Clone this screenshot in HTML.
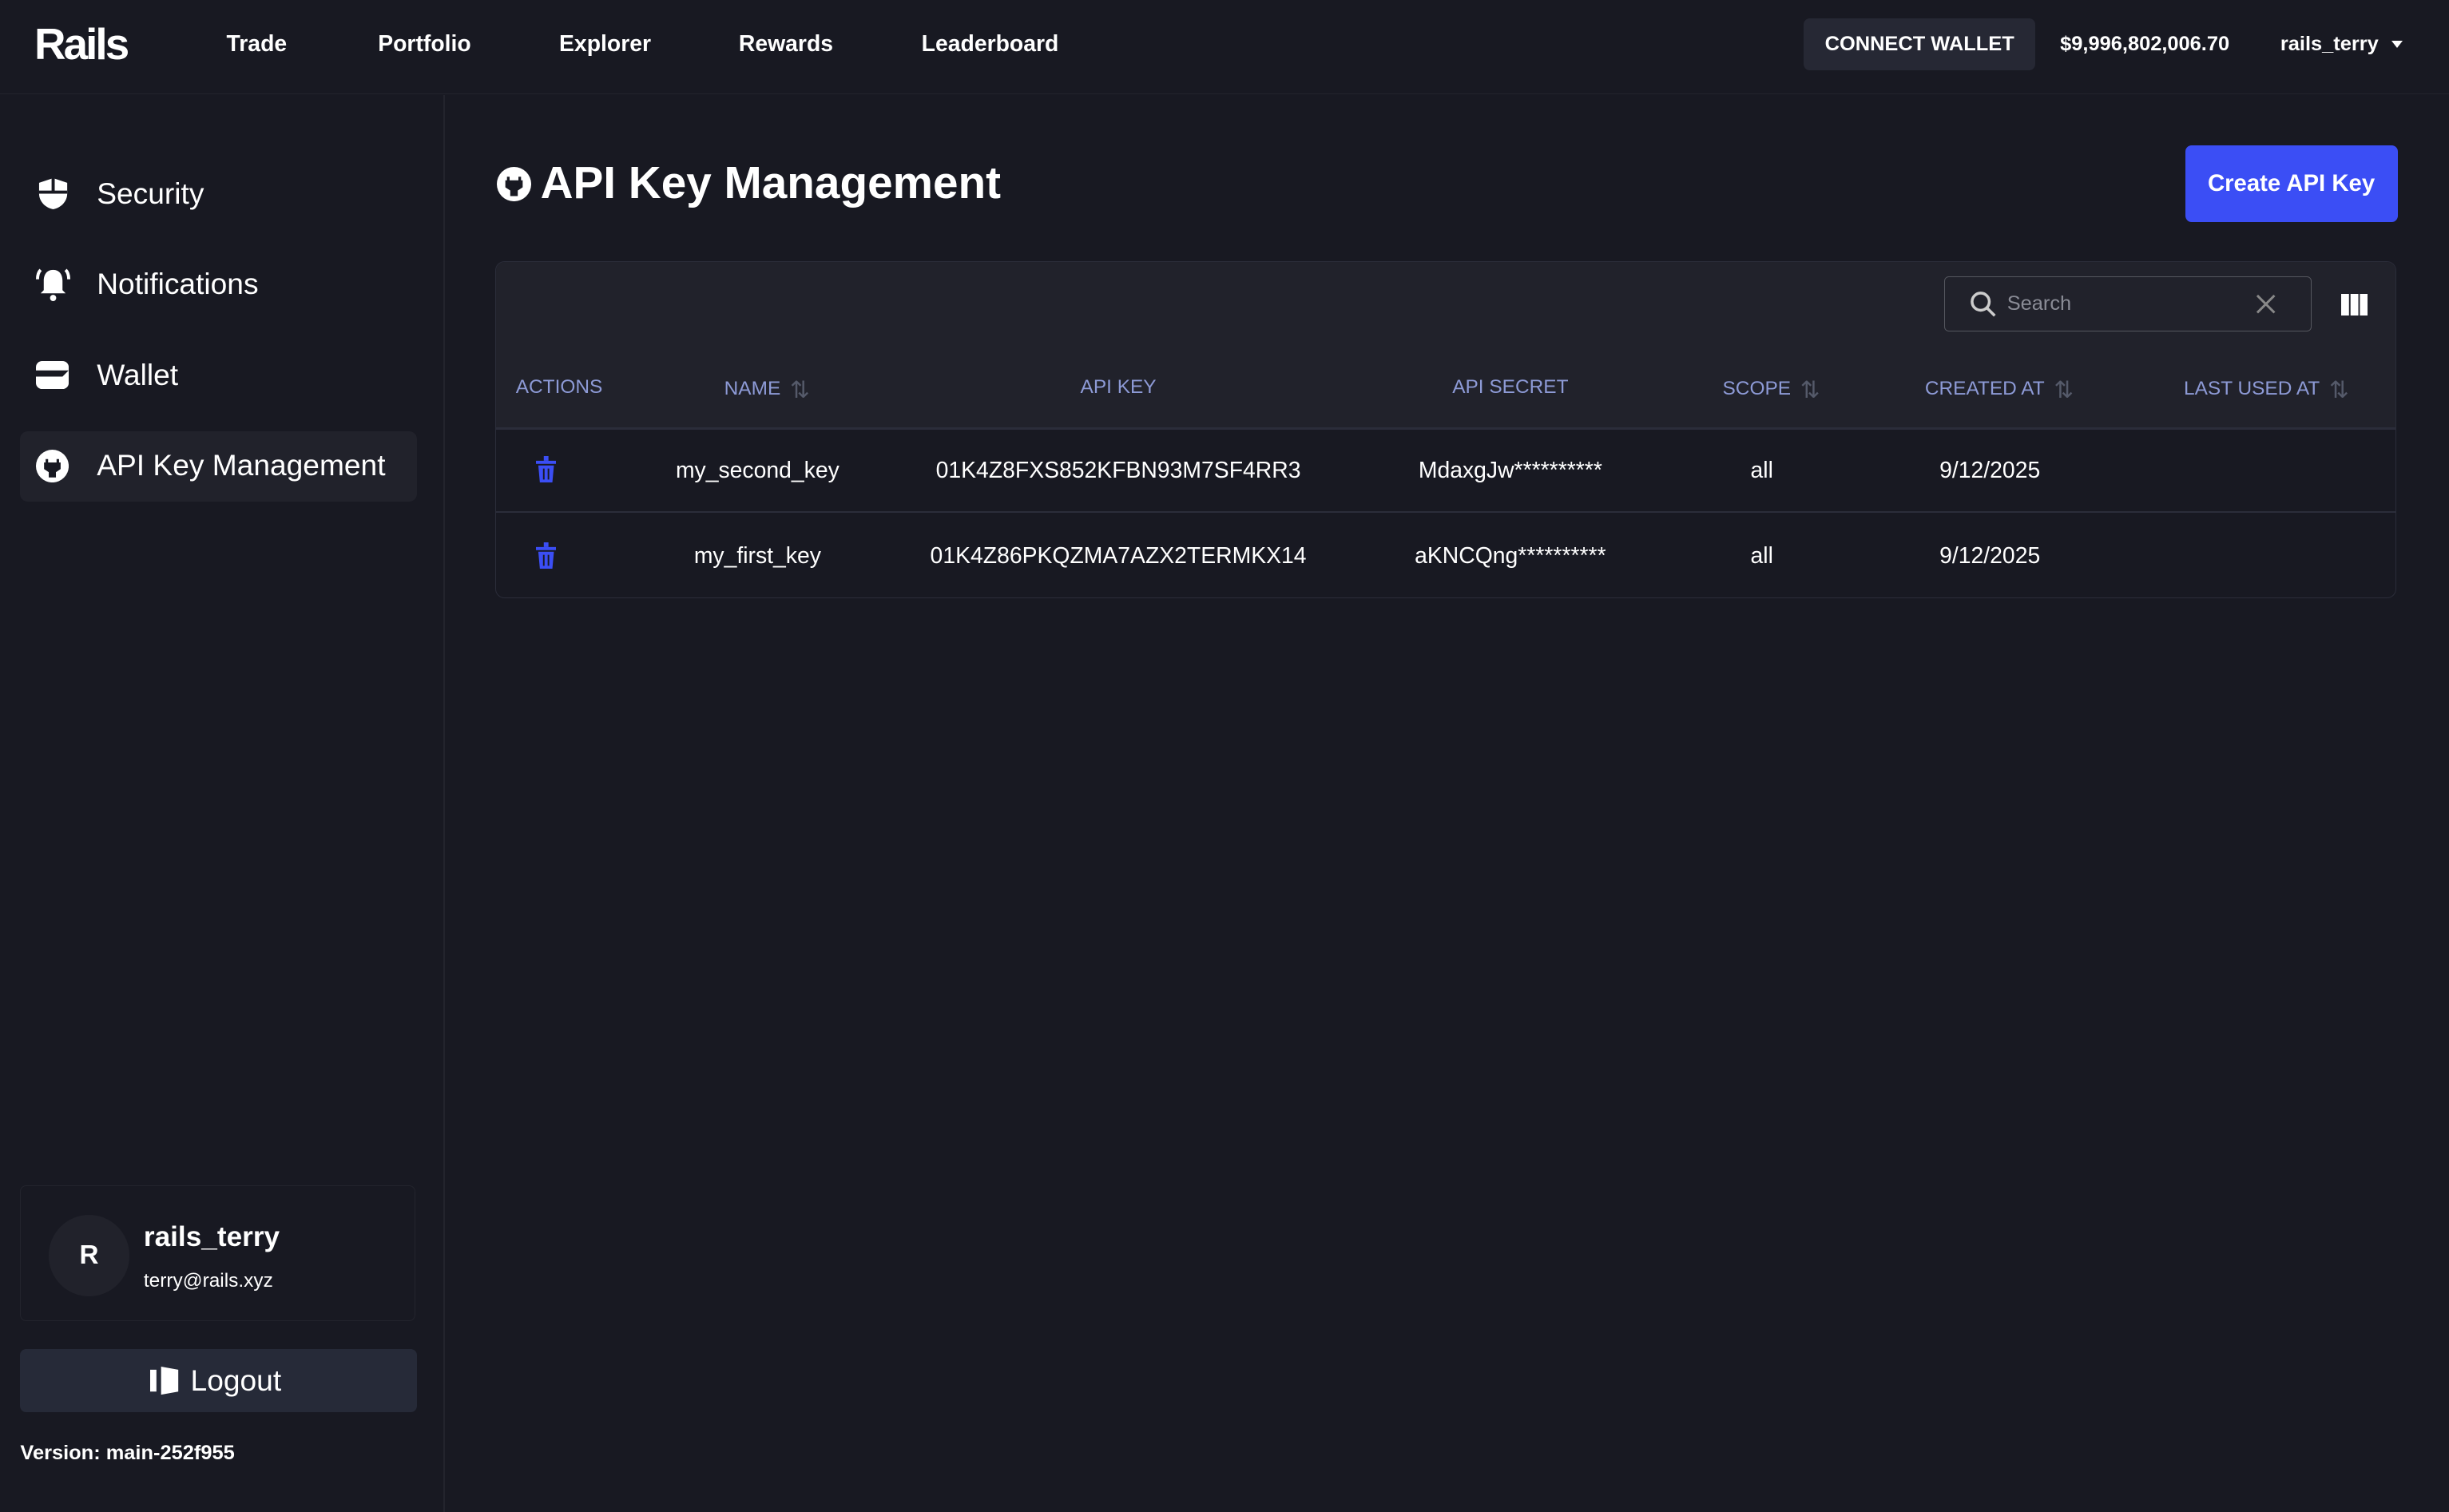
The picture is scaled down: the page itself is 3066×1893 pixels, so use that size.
<!DOCTYPE html>
<html><head><meta charset="utf-8"><style>
html,body{margin:0;padding:0;background:#181922;overflow:hidden}
#w{zoom:1.9554;width:1568px;height:968px;position:relative;font-family:"Liberation Sans",sans-serif;color:#fff;background:#181922}
.a{position:absolute;white-space:nowrap}
.nav{font-size:14.5px;font-weight:bold;top:20px}
.si{font-size:19px;left:62px}
.th{font-size:12.5px;color:#8d9ad6;top:241px;transform:translateX(-50%)}
.td{font-size:14.5px;transform:translateX(-50%)}
.sort{display:inline-block;color:#555a6a;font-size:15px;margin-left:6px;vertical-align:-2px}
</style></head><body><div id="w">
<div class="a" style="left:0;top:0;width:1568px;height:60px;border-bottom:1px solid #23242d"></div>
<div class="a" style="left:22px;top:12px;font-size:28px;font-weight:bold;letter-spacing:-1.5px">Rails</div>
<div class="a nav" style="left:145px">Trade</div>
<div class="a nav" style="left:242px">Portfolio</div>
<div class="a nav" style="left:358px">Explorer</div>
<div class="a nav" style="left:473px">Rewards</div>
<div class="a nav" style="left:590px">Leaderboard</div>
<div class="a" style="left:1155px;top:12px;width:148px;height:33px;background:#262834;border-radius:4px;font-size:13px;font-weight:bold;text-align:center;line-height:33px">CONNECT WALLET</div>
<div class="a" style="left:1319px;top:21px;font-size:13px;font-weight:bold">$9,996,802,006.70</div>
<div class="a" style="left:1460px;top:21px;font-size:13px;font-weight:bold">rails_terry</div>
<div class="a" style="left:1531px;top:26px;border:4px solid transparent;border-top:5px solid #fff"></div>
<div class="a" style="left:284px;top:61px;width:1px;height:907px;background:#23242d"></div>

<svg class="a" style="left:24px;top:113px" width="20" height="22" viewBox="0 0 20 22"><path d="M10 1L1 4v7c0 5 4 9 9 10 5-1 9-5 9-10V4z" fill="#fff"/><path d="M1 10h18M10 1v8" stroke="#181922" stroke-width="2"/></svg>
<div class="a si" style="top:113px">Security</div>
<svg class="a" style="left:23px;top:170px" width="22" height="24" viewBox="0 0 22 24"><path d="M11 3c-4 0-6 3-6 7v6l-2 2h16l-2-2v-6c0-4-2-7-6-7z" fill="#fff"/><circle cx="11" cy="21" r="2" fill="#fff"/><path d="M3 3C1 5 1 8 1 9M19 3c2 2 2 5 2 6" stroke="#fff" stroke-width="2" fill="none"/></svg>
<div class="a si" style="top:171px">Notifications</div>
<svg class="a" style="left:23px;top:231px" width="21" height="18" viewBox="0 0 21 18"><rect x="0" y="0" width="21" height="18" rx="4" fill="#fff"/><path d="M0 6h21l-4 4H0z" fill="#181922"/></svg>
<div class="a si" style="top:229px">Wallet</div>
<div class="a" style="left:13px;top:276px;width:254px;height:45px;background:#21222b;border-radius:5px"></div>
<svg class="a" style="left:23px;top:288px" width="21" height="21" viewBox="0 0 21 21"><circle cx="10.5" cy="10.5" r="10.5" fill="#fff"/><path d="M7 6v3M14 6v3M6 9h9v3l-3 2v3h-3v-3l-3-2z" stroke="#181922" stroke-width="1.6" fill="#181922"/></svg>
<div class="a si" style="top:287px">API Key Management</div>

<div class="a" style="left:13px;top:759px;width:252px;height:86px;border:1px solid #23242d;border-radius:4px"></div>
<div class="a" style="left:31px;top:778px;width:52px;height:52px;border-radius:50%;background:#21222b;font-size:17px;font-weight:bold;text-align:center;line-height:52px">R</div>
<div class="a" style="left:92px;top:782px;font-size:18px;font-weight:bold">rails_terry</div>
<div class="a" style="left:92px;top:813px;font-size:12.5px">terry@rails.xyz</div>
<div class="a" style="left:13px;top:864px;width:254px;height:40px;background:#262a38;border-radius:4px"></div>
<svg class="a" style="left:96px;top:874px" width="20" height="20" viewBox="0 0 20 20"><rect x="0" y="3" width="4" height="14" fill="#fff"/><path d="M7 1l11 2v14l-11 2z" fill="#fff"/></svg>
<div class="a" style="left:122px;top:873px;font-size:19px">Logout</div>
<div class="a" style="left:13px;top:923px;font-size:13px;font-weight:bold">Version: main-252f955</div>

<svg class="a" style="left:318px;top:107px" width="22" height="22" viewBox="0 0 21 21"><circle cx="10.5" cy="10.5" r="10.5" fill="#fff"/><path d="M7 6v3M14 6v3M6 9h9v3l-3 2v3h-3v-3l-3-2z" stroke="#181922" stroke-width="1.6" fill="#181922"/></svg>
<div class="a" style="left:346px;top:101px;font-size:29px;font-weight:bold">API Key Management</div>
<div class="a" style="left:1399px;top:93px;width:136px;height:49px;background:#3b4ef5;border-radius:4px;font-size:15px;font-weight:bold;text-align:center;line-height:49px">Create API Key</div>

<div class="a" style="left:317px;top:167px;width:1216px;height:215px;border:1px solid #2b2d3a;border-radius:6px;overflow:hidden">
 <div style="position:absolute;left:0;top:0;width:100%;height:106px;background:#21222b;border-bottom:2px solid #2b2d3a"></div>
 <div style="position:absolute;left:0;top:160px;width:100%;height:1px;background:#2b2d3a"></div>
</div>
<div class="a" style="left:1245px;top:177px;width:234px;height:34px;border:1px solid #55575f;border-radius:3px"></div>
<svg class="a" style="left:1261px;top:186px" width="17" height="17" viewBox="0 0 17 17"><circle cx="7" cy="7" r="5.5" stroke="#ccc" stroke-width="1.8" fill="none"/><path d="M11 11l5 5" stroke="#ccc" stroke-width="1.8"/></svg>
<div class="a" style="left:1285px;top:187px;font-size:13px;color:#8a8c96">Search</div>
<svg class="a" style="left:1444px;top:188px" width="13" height="13" viewBox="0 0 13 13"><path d="M1 1l11 11M12 1L1 12" stroke="#888" stroke-width="1.5"/></svg>
<svg class="a" style="left:1499px;top:188px" width="17" height="14" viewBox="0 0 17 14"><rect x="0" y="0" width="5" height="14" fill="#fff"/><rect x="6" y="0" width="5" height="14" fill="#fff"/><rect x="12" y="0" width="5" height="14" fill="#fff"/></svg>

<div class="a th" style="left:358px">ACTIONS</div>
<div class="a th" style="left:491px">NAME<span class="sort">⇅</span></div>
<div class="a th" style="left:716px">API KEY</div>
<div class="a th" style="left:967px">API SECRET</div>
<div class="a th" style="left:1134px">SCOPE<span class="sort">⇅</span></div>
<div class="a th" style="left:1280px">CREATED AT<span class="sort">⇅</span></div>
<div class="a th" style="left:1451px">LAST USED AT<span class="sort">⇅</span></div>

<svg class="a" style="left:343px;top:292px" width="13" height="17" viewBox="0 0 13 17"><rect x="5" y="0" width="3" height="3" fill="#3b4ef5"/><rect x="0" y="3" width="13" height="2" fill="#3b4ef5"/><path d="M1.5 6h10l-1 11h-8z" fill="#3b4ef5"/><path d="M5 8v7M8 8v7" stroke="#181922" stroke-width="1"/></svg>
<div class="a td" style="left:485px;top:293px">my_second_key</div>
<div class="a td" style="left:716px;top:293px">01K4Z8FXS852KFBN93M7SF4RR3</div>
<div class="a td" style="left:967px;top:293px">MdaxgJw**********</div>
<div class="a td" style="left:1128px;top:293px">all</div>
<div class="a td" style="left:1274px;top:293px">9/12/2025</div>
<svg class="a" style="left:343px;top:347px" width="13" height="17" viewBox="0 0 13 17"><rect x="5" y="0" width="3" height="3" fill="#3b4ef5"/><rect x="0" y="3" width="13" height="2" fill="#3b4ef5"/><path d="M1.5 6h10l-1 11h-8z" fill="#3b4ef5"/><path d="M5 8v7M8 8v7" stroke="#181922" stroke-width="1"/></svg>
<div class="a td" style="left:485px;top:348px">my_first_key</div>
<div class="a td" style="left:716px;top:348px">01K4Z86PKQZMA7AZX2TERMKX14</div>
<div class="a td" style="left:967px;top:348px">aKNCQng**********</div>
<div class="a td" style="left:1128px;top:348px">all</div>
<div class="a td" style="left:1274px;top:348px">9/12/2025</div>
</div></body></html>
